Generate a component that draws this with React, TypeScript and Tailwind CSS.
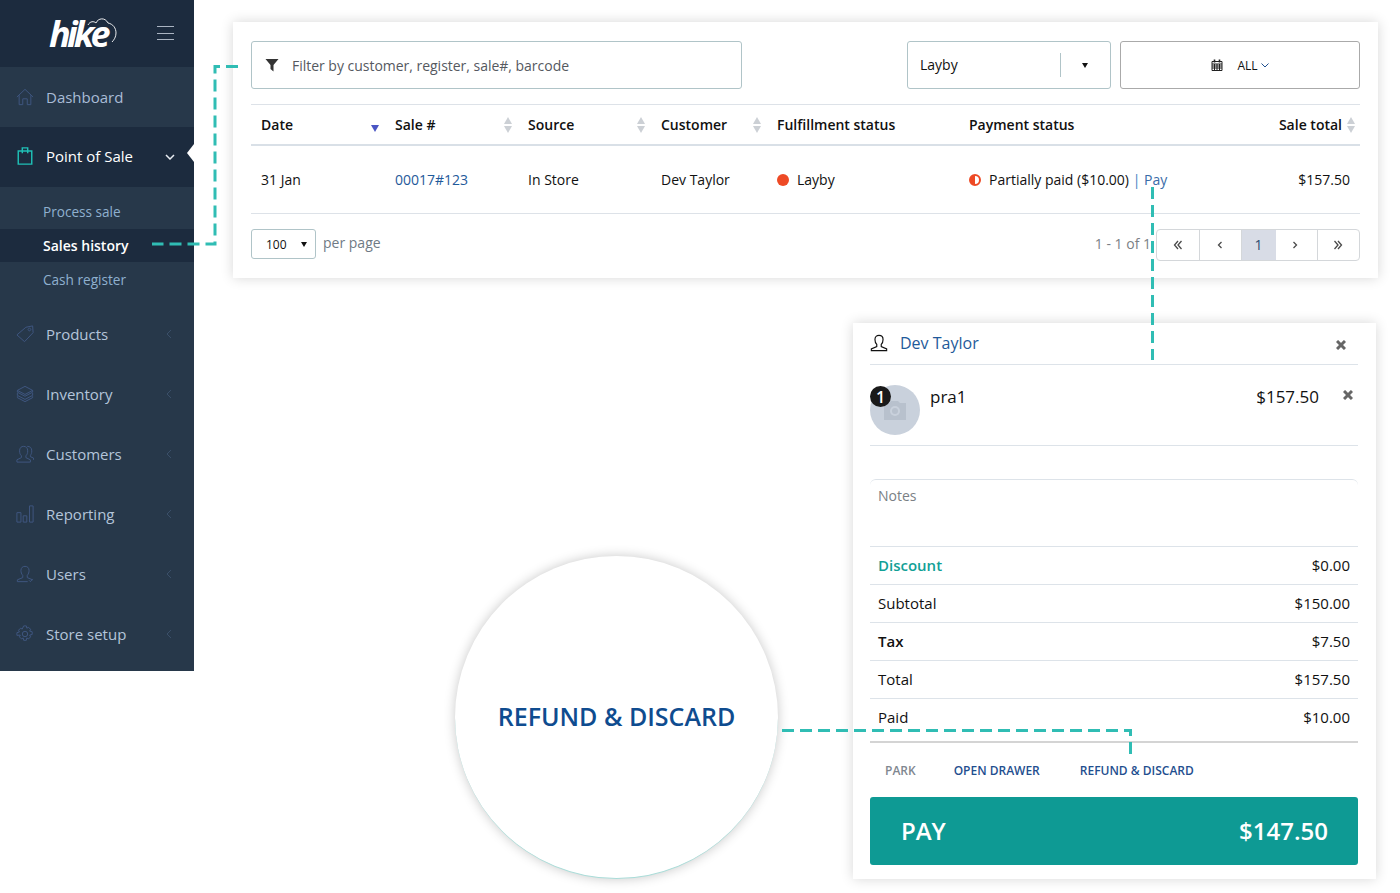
import type { ReactNode } from 'react';

const openSans = { fontFamily: '"Open Sans", sans-serif' };

function Icon({ children, className = 'text-[#3f5680]' }: { children: ReactNode; className?: string }) {
  return (
    <svg width="18" height="18" viewBox="0 0 20 20" fill="none" stroke="currentColor" strokeWidth="1.100" className={className}>
      {children}
    </svg>
  );
}

const HomeIcon = () => (
  <Icon>
    <path d="M1 10 10 1.500 19 10M3.500 8V18.500H7.500V12H12.500V18.500H16.500V8" />
  </Icon>
);
const BagIcon = () => (
  <Icon className="text-[#1fc0b6]">
    <path strokeWidth="1.600" d="M2.500 4.500h15V19h-15zM7 7V1h6v6" />
  </Icon>
);
const TagIcon = () => (
  <Icon>
    <path d="M1 11 11 2.500 18.500 1 19 8.500 9.500 18.500zM15 3.500a1.500 1.500 0 1 1-.1 0" />
  </Icon>
);
const LayersIcon = () => (
  <Icon>
    <path d="m10 1.500 8.500 4.500L10 10.500 1.500 6zM1.500 6v2L10 12.500 18.500 8V6M1.500 9v2.500L10 16l8.500-4.500V9M1.500 12.500V14L10 18.500 18.500 14v-1.500" />
  </Icon>
);
const CustomersIcon = () => (
  <Icon>
    <path d="M1 19v-2.500l5-2.500v-2C4.500 10.500 4 9 4 6.500 4 3 6 1.500 8.500 1.500S13 3 13 6.500c0 2.500-.5 4-2 5.500v2l5 2.500V19zM12.500 1.500c3 0 5 1.500 5 5 0 2.500-.5 3.500-1.500 5v1.500l3.500 1.500v2" />
  </Icon>
);
const ChartIcon = () => (
  <Icon>
    <path d="M1 8.500h4.500V19H1zM8 12h4v7H8zM15 1h4v18h-4z" />
  </Icon>
);
const UserIcon = ({ className }: { className?: string }) => (
  <Icon className={className}>
    <path d="M13 18.500H1.500v-2l6-2.500v-2.500C6 10 5.500 8 5.500 6c0-3 2-4.500 4.500-4.500S14.500 3 14.500 6c0 2-.5 4-2 5.500V14l6 2.500" />
    <path d="m14.500 17 1.500 1.500 2.500-3" />
  </Icon>
);
const ContactIcon = () => (
  <Icon className="text-[#111]">
    <path strokeWidth="1.300" d="M1.500 18.500v-2l6-2.500v-2.500C6 10 5.500 8 5.500 6c0-3 2-4.500 4.500-4.500S14.500 3 14.500 6c0 2-.5 4-2 5.500V14l6 2.500v2z" />
  </Icon>
);
const GearIcon = () => (
  <Icon>
    <circle cx="10" cy="10" r="3" />
    <path d="M8.500 1h3l.5 2.500 2-.9 2.200 2.200-1 2 2.800.7v3l-2.800.7 1 2-2.200 2.200-2-1-.5 2.600h-3l-.5-2.600-2 1-2.200-2.200 1-2L1 11.500v-3l2.800-.7-1-2L5 3.600l2 .9z" />
  </Icon>
);

const navItems = [
  { label: 'Products', icon: <TagIcon /> },
  { label: 'Inventory', icon: <LayersIcon /> },
  { label: 'Customers', icon: <CustomersIcon /> },
  { label: 'Reporting', icon: <ChartIcon /> },
  { label: 'Users', icon: <UserIcon /> },
  { label: 'Store setup', icon: <GearIcon /> },
];

function Sidebar() {
  return (
    <aside className="absolute left-0 top-0 flex h-[671px] w-[194px] flex-col bg-[#27384a] text-[15px]">
      <div className="relative flex h-[67px] items-center bg-[#1c2b3e] pl-[49px]">
        <span className="text-[36px] font-bold italic leading-none tracking-[-3.800px] text-white">hike</span>
        <svg width="32" height="30" viewBox="0 0 32 30" fill="none" stroke="#fff" strokeWidth="0.900" className="absolute left-[86px] top-[16px]">
          <path d="M2 9C4 5 8 5 10 7 12 2 19 1 22 7 27 8 30 12 30 17 30 21 28 24 26 26" />
        </svg>
        <div className="absolute left-[157px] top-[26px] flex h-[14px] w-[17px] flex-col justify-between">
          <span className="h-px bg-[#aab4c2]" />
          <span className="h-px bg-[#aab4c2]" />
          <span className="h-px bg-[#aab4c2]" />
        </div>
      </div>
      <div className="flex h-[60px] items-center gap-[12px] pl-[16px] text-[#a9bcd6]">
        <HomeIcon />
        Dashboard
      </div>
      <div className="relative flex h-[60px] items-center gap-[12px] bg-[#1c2b3e] pb-[2px] pl-[16px] text-white">
        <BagIcon />
        Point of Sale
        <svg width="10" height="6" viewBox="0 0 10 6" fill="none" stroke="#e8ecf2" strokeWidth="1.500" className="absolute left-[165px] top-[27px]">
          <path d="m1 1 4 4 4-4" />
        </svg>
        <span className="absolute right-0 top-[17px] h-0 w-0 border-y-[9px] border-r-[7px] border-y-transparent border-r-white" />
      </div>
      <div className="flex h-[117px] flex-col pt-[9px] text-sm">
        <div className="flex h-[33px] items-center pb-[2px] pl-[43px] text-[13.600px] text-[#8fb0cf]">Process sale</div>
        <div className="flex h-[33px] items-center bg-[#1c2b3e] pl-[43px] font-semibold text-white">Sales history</div>
        <div className="flex h-[36px] items-center pl-[43px] text-[13.600px] text-[#8fb0cf]">Cash register</div>
      </div>
      {navItems.map((item) => (
        <div key={item.label} className="relative flex h-[60px] items-center gap-[12px] pl-[16px] text-[#b4c5da]">
          {item.icon}
          {item.label}
          <svg width="6" height="10" viewBox="0 0 6 10" fill="none" stroke="#3a4f69" strokeWidth="1" className="absolute left-[166px] top-[25px]">
            <path d="M5 1 1 5l4 4" />
          </svg>
        </div>
      ))}
    </aside>
  );
}

function SortArrows() {
  return (
    <span className="flex flex-col gap-[2px]">
      <span className="h-0 w-0 border-x-[4px] border-b-[7px] border-x-transparent border-b-[#ccd0d5]" />
      <span className="h-0 w-0 border-x-[4px] border-t-[7px] border-x-transparent border-t-[#ccd0d5]" />
    </span>
  );
}

function Caret({ className = '' }: { className?: string }) {
  return <span className={`h-0 w-0 border-x-[3.500px] border-t-[5px] border-x-transparent border-t-[#111] ${className}`} />;
}

function HeaderCell({ label, width, arrows = true }: { label: string; width: string; arrows?: boolean }) {
  return (
    <div className={`flex items-center justify-between pl-[10px] pr-[6px] ${width}`}>
      <span>{label}</span>
      {arrows && <SortArrows />}
    </div>
  );
}

function PageChevron({ d }: { d: string }) {
  return (
    <svg width="10" height="10" viewBox="0 0 10 10" fill="none" stroke="#4a4a4a" strokeWidth="1.300">
      <path d={d} />
    </svg>
  );
}

function SalesPanel() {
  return (
    <section className="absolute left-[233px] top-[22px] h-[256px] w-[1145px] bg-white px-[18px] pt-[19px] text-sm text-[#111] shadow-[0_0_12px_rgba(0,0,0,0.16)]">
      <div className="flex h-[48px]">
        <div className="flex w-[491px] items-center rounded-[3px] border border-[#b0c4c8] pl-[13px] text-[#55595f]">
          <svg width="14" height="14" viewBox="0 0 14 14" fill="#333">
            <path d="M.500 1h13L8.500 7v6.500L5.500 11V7z" />
          </svg>
          <span className="ml-[13px] pt-[2px] tracking-[-0.020px]">Filter by customer, register, sale#, barcode</span>
        </div>
        <div className="ml-[165px] flex w-[204px] items-center rounded-[3px] border border-[#b0c4c8] pl-[12px]">
          <span className="w-[140px]">Layby</span>
          <span className="h-[24px] w-px bg-[#b0c4c8]" />
          <Caret className="ml-[21px]" />
        </div>
        <div className="ml-[9px] flex w-[240px] items-center justify-center rounded-[3px] border border-[#aaa] text-xs">
          <svg width="12" height="12" viewBox="0 0 12 12" fill="none" stroke="#222" strokeWidth="1">
            <path d="M1 2.500h10v9H1zM1 5h10M1 7h10M1 9h10M3.500 5v6.500M6 5v6.500M8.500 5v6.500" />
            <path strokeWidth="1.600" d="M3.500.5v3M8.500.5v3" />
          </svg>
          <span className="ml-[14px] pt-[2px]">ALL</span>
          <svg width="8" height="5" viewBox="0 0 8 5" fill="none" stroke="#1f4f8f" strokeWidth="1" className="ml-[3px]">
            <path d="m.5.5 3.500 3.500L7.500.5" />
          </svg>
        </div>
      </div>
      <div className="mt-[15px] flex h-[42px] items-center border-y border-b-[2px] border-y-[#dde2e8] border-b-[#d9e0e7] font-semibold">
        <div className="relative w-[134px] pl-[10px]">
          Date
          <span className="absolute left-[120px] top-[10px] h-0 w-0 border-x-[4.500px] border-t-[7px] border-x-transparent border-t-[#4a55c4]" />
        </div>
        <HeaderCell label="Sale #" width="w-[133px]" />
        <HeaderCell label="Source" width="w-[133px]" />
        <HeaderCell label="Customer" width="w-[116px]" />
        <HeaderCell label="Fulfillment status" width="w-[192px]" arrows={false} />
        <HeaderCell label="Payment status" width="w-[200px]" arrows={false} />
        <div className="flex flex-1 items-center justify-end gap-[5px] pr-[5px]">
          Sale total
          <SortArrows />
        </div>
      </div>
      <div className="flex h-[68px] items-center border-b border-[#dde2e8]">
        <div className="w-[134px] pl-[10px]">31 Jan</div>
        <div className="w-[133px] pl-[10px] text-[#1f5a9a]">00017#123</div>
        <div className="w-[133px] pl-[10px]">In Store</div>
        <div className="w-[116px] pl-[10px]">Dev Taylor</div>
        <div className="flex w-[192px] items-center gap-[8px] pl-[10px]">
          <span className="h-[12px] w-[12px] shrink-0 rounded-full bg-[#ee4a25]" />
          Layby
        </div>
        <div className="flex w-[200px] shrink-0 items-center gap-[8px] whitespace-nowrap pl-[10px]">
          <span className="h-[12px] w-[12px] shrink-0 rounded-full border-[2px] border-[#ee4a25] bg-[linear-gradient(90deg,#ee4a25_50%,#fff_50%)]" />
          <span>
            Partially paid ($10.00) <span className="text-[#3f7fc4]">|</span> <span className="text-[#3a6ca8]">Pay</span>
          </span>
        </div>
        <div className="flex-1 pr-[10px] text-right">$157.50</div>
      </div>
      <div className="mt-[15px] flex items-start">
        <div className="flex h-[30px] w-[65px] items-center justify-between rounded-[3px] border border-[#b0c4c8] pl-[14px] pr-[8px] pt-[1px] text-xs">
          100
          <Caret />
        </div>
        <span className="ml-[7px] mt-[4px] text-[#6f7a85]">per page</span>
        <span className="ml-auto mt-[5px] text-[#7b7f86]">1 - 1 of 1</span>
        <div className="ml-[5px] flex h-[32px] w-[204px] items-stretch overflow-hidden rounded-[4px] border border-[#d4d7da] text-[#2d4a70]">
          <span className="flex w-[43px] items-center justify-center border-r border-[#d4d7da]">
            <PageChevron d="M5 1 1.500 5 5 9M8.500 1 5 5l3.500 4" />
          </span>
          <span className="flex w-[42px] items-center justify-center border-r border-[#d4d7da] pr-[1px]">
            <PageChevron d="M6.500 2 3.500 5l3 3" />
          </span>
          <span className="flex w-[34px] items-center justify-center bg-[#d8dce6] pr-[1px]">1</span>
          <span className="flex w-[42px] items-center justify-center border-r border-[#d4d7da] pr-[3px]">
            <PageChevron d="m3.500 2 3 3-3 3" />
          </span>
          <span className="flex flex-1 items-center justify-center pr-[1px]">
            <PageChevron d="M1.500 1 5 5 1.500 9M5 1l3.500 4L5 9" />
          </span>
        </div>
      </div>
    </section>
  );
}

function SummaryRow({ label, value, labelClass = '' }: { label: string; value: string; labelClass?: string }) {
  return (
    <div className="flex h-[38px] items-center justify-between border-t border-[#dde3e9] px-[8px] pb-[1px]">
      <span className={labelClass}>{label}</span>
      <span>{value}</span>
    </div>
  );
}

function CloseIcon({ className }: { className?: string }) {
  return (
    <svg width="10" height="10" viewBox="0 0 10 10" stroke="#666" strokeWidth="3" className={className}>
      <path d="m1 1 8 8M9 1 1 9" />
    </svg>
  );
}

function CartPanel() {
  return (
    <section className="absolute left-[853px] top-[323px] h-[556px] w-[523px] bg-white pl-[17px] pr-[18px] text-[15px] text-[#111] shadow-[0_0_12px_rgba(0,0,0,0.16)]">
      <div className="relative flex h-[42px] items-center border-b border-[#dde3e9] pb-[2px]">
        <ContactIcon />
        <span className="ml-[12px] text-base text-[#1f5a9a]">Dev Taylor</span>
        <CloseIcon className="absolute left-[466px] top-[17px]" />
      </div>
      <div className="relative flex h-[81px] border-b border-[#dde3e9] pt-[20px]">
        <div className="flex h-[50px] w-[50px] items-center justify-center rounded-full bg-[#c9d1dc]">
          <svg width="24" height="21" viewBox="0 0 24 21" fill="#b8c1cd">
            <path d="M1 3h5l2-2h7l2 2h6v17H1z" />
            <circle cx="12" cy="11" r="5" fill="#c9d1dc" />
            <circle cx="12" cy="11" r="3" />
          </svg>
        </div>
        <span className="absolute left-0 top-[21px] flex h-[21px] w-[21px] items-center justify-center rounded-full bg-[#1a1a1a] text-base font-semibold text-white">1</span>
        <span className="ml-[10px] text-[17px] leading-[24px]">pra1</span>
        <span className="ml-auto text-[17px] leading-[24px]">$157.50</span>
        <CloseIcon className="ml-[24px] mr-[5px] mt-[5px]" />
      </div>
      <div className="mt-[33px] h-[67px] rounded-t-[6px] border-t border-[#dde3e9] px-[8px] pt-[6px] text-sm text-[#7a7f85]">Notes</div>
      <div className="text-[15px]">
        <SummaryRow label="Discount" value="$0.00" labelClass="font-semibold text-[#12a096]" />
        <SummaryRow label="Subtotal" value="$150.00" />
        <SummaryRow label="Tax" value="$7.50" labelClass="font-semibold" />
        <SummaryRow label="Total" value="$157.50" />
        <SummaryRow label="Paid" value="$10.00" />
      </div>
      <div className="mt-[5px] flex h-[56px] items-center border-t-[2px] border-[#d4d4d4] pl-[15px] pt-[2px] text-xs font-semibold">
        <span className="text-[#7f8790]">PARK</span>
        <span className="ml-[38px] text-[#1f4f8f]">OPEN DRAWER</span>
        <span className="ml-[40px] text-[#1f4f8f]">REFUND &amp; DISCARD</span>
      </div>
      <div className="flex h-[68px] items-center justify-between rounded-[3px] bg-[#0e9a94] pl-[31px] pr-[30px] text-2xl font-semibold text-white">
        <span>PAY</span>
        <span>$147.50</span>
      </div>
    </section>
  );
}

function Connectors() {
  return (
    <svg width="1400" height="893" fill="none" stroke="#30bdb4" strokeWidth="3" strokeDasharray="12 6" className="pointer-events-none absolute left-0 top-0">
      <path d="M238 66.500H215V244H152" />
      <path d="M1152.500 187V360" />
      <path d="M782 730.500H1130.500V757" />
    </svg>
  );
}

export default function App() {
  return (
    <div className="relative h-[893px] w-[1400px] overflow-hidden bg-white" style={openSans}>
      <Sidebar />
      <SalesPanel />
      <CartPanel />
      <div className="absolute left-[455px] top-[556px] flex h-[323px] w-[323px] items-center justify-center rounded-full border-b border-[#a9dcd8] bg-white text-[25px] font-semibold text-[#0f4c8f] shadow-[0_0_12px_rgba(0,0,0,0.22)]">
        REFUND &amp; DISCARD
      </div>
      <Connectors />
    </div>
  );
}
